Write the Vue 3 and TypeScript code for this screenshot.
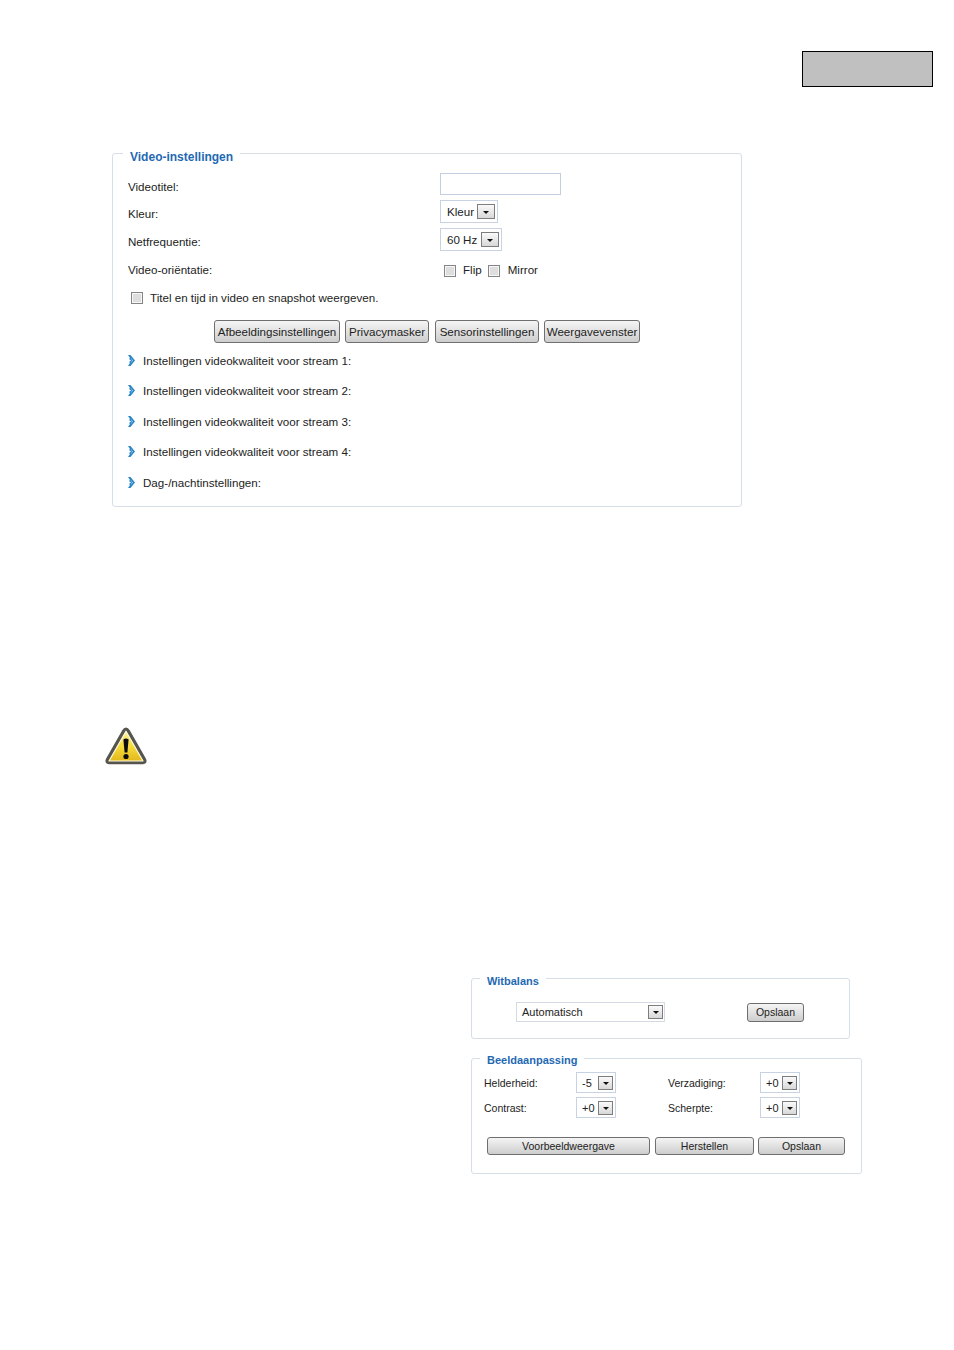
<script setup lang="ts">
const streams = [
  'Instellingen videokwaliteit voor stream 1:',
  'Instellingen videokwaliteit voor stream 2:',
  'Instellingen videokwaliteit voor stream 3:',
  'Instellingen videokwaliteit voor stream 4:',
  'Dag-/nachtinstellingen:',
]
const tabs = [
  { label: 'Afbeeldingsinstellingen', width: 126 },
  { label: 'Privacymasker', width: 84 },
  { label: 'Sensorinstellingen', width: 104 },
  { label: 'Weergavevenster', width: 96 },
]
const adjust = [
  { label: 'Helderheid:', value: '-5' },
  { label: 'Verzadiging:', value: '+0' },
  { label: 'Contrast:', value: '+0' },
  { label: 'Scherpte:', value: '+0' },
]
</script>

<template>
  <div class="page">
    <div class="greybox"></div>

    <fieldset class="panel video">
      <legend>Video-instellingen</legend>
      <div class="row first">
        <span class="label">Videotitel:</span>
        <input class="text-input" type="text" />
      </div>
      <div class="row">
        <span class="label">Kleur:</span>
        <div class="select colour"><span>Kleur</span><i class="arrow"></i></div>
      </div>
      <div class="row">
        <span class="label">Netfrequentie:</span>
        <div class="select freq"><span>60 Hz</span><i class="arrow"></i></div>
      </div>
      <div class="row check-row">
        <span class="label">Video-oriëntatie:</span>
        <div class="checks">
          <input type="checkbox" class="check" /><span class="flip">Flip</span>
          <input type="checkbox" class="check" /><span class="mirror">Mirror</span>
        </div>
      </div>
      <div class="overlay-row">
        <input type="checkbox" class="check" />
        <span>Titel en tijd in video en snapshot weergeven.</span>
      </div>
      <div class="tabs">
        <button v-for="t in tabs" :key="t.label" class="btn tab" :style="{ width: t.width + 'px' }">{{ t.label }}</button>
      </div>
      <ul class="streams">
        <li v-for="s in streams" :key="s">
          <svg width="7" height="11" viewBox="0 0 7 11">
            <path d="M0 0 L2.5 0 L7 5.5 L2.5 11 L0 11 L2 8 L1 7 L3 5.5 L1 4 L2 3 Z" fill="#2a86c6" />
            <path d="M2.5 2.5 L5 5.5 L2.5 8.5 L4 5.5 Z" fill="#a5d0ec" />
          </svg>
          <span>{{ s }}</span>
        </li>
      </ul>
    </fieldset>

    <svg class="warning" width="42" height="38" viewBox="0 0 42 38">
      <defs>
        <linearGradient id="yellow" x1="0" y1="0" x2="0" y2="1">
          <stop offset="0" stop-color="#fff3a0" />
          <stop offset="0.5" stop-color="#f6dc3c" />
          <stop offset="1" stop-color="#e4b81c" />
        </linearGradient>
      </defs>
      <path d="M21 0.5 Q23.2 0.5 24.6 3 L41 31.8 Q43 36.8 38 37.2 L4 37.2 Q-1 36.8 1 31.8 L17.4 3 Q18.8 0.5 21 0.5 Z" fill="#55554d" />
      <path d="M21 4.2 L38 34 L4 34 Z" fill="url(#yellow)" stroke="#fffbe0" stroke-width="1.2" stroke-linejoin="round" />
      <path d="M18.4 12.6 Q21 10.4 23.6 12.6 L22.4 25.5 L19.6 25.5 Z" fill="#0c0c0c" />
      <circle cx="21" cy="29.5" r="2.6" fill="#0c0c0c" />
    </svg>

    <fieldset class="panel white">
      <legend>Witbalans</legend>
      <div class="white-row">
        <div class="select wide"><span>Automatisch</span><i class="arrow"></i></div>
        <button class="btn save">Opslaan</button>
      </div>
    </fieldset>

    <fieldset class="panel image">
      <legend>Beeldaanpassing</legend>
      <div class="adjust">
        <template v-for="a in adjust" :key="a.label">
          <span class="adj-label">{{ a.label }}</span>
          <div class="select small"><span>{{ a.value }}</span><i class="arrow"></i></div>
        </template>
      </div>
      <div class="actions">
        <button class="btn preview">Voorbeeldweergave</button>
        <button class="btn reset">Herstellen</button>
        <button class="btn store">Opslaan</button>
      </div>
    </fieldset>
  </div>
</template>

<style>
html,
body {
  background: #fff;
}
</style>

<style scoped>
.page {
  width: 954px;
  height: 1350px;
  box-sizing: border-box;
  padding-top: 51px;
  display: flex;
  flex-direction: column;
  align-items: flex-start;
  font-family: "Liberation Sans", Arial, sans-serif;
  font-size: 11.6px;
  color: #222;
  overflow: hidden;
}
.greybox {
  width: 131px;
  height: 36px;
  box-sizing: border-box;
  margin-left: 802px;
  background: #c0c0c0;
  border: 1px solid #000;
}
.panel {
  margin: 0;
  min-width: 0;
  box-sizing: border-box;
  border: 1px solid #d6dee7;
  border-radius: 3px;
  padding: 0;
}
legend {
  padding: 8px 7px 0;
  margin-left: -5px;
  font-size: 12px;
  font-weight: bold;
  line-height: 14px;
  color: #1f69b3;
}
.video {
  margin-top: 55px;
  margin-left: 112px;
  width: 630px;
  height: 365px;
  padding: 9px 0 0 15px;
}
.row {
  display: flex;
  align-items: center;
  margin-top: 5px;
}
.row.first {
  margin-top: 0;
}
.label {
  width: 312px;
  padding-top: 4px;
}
.text-input {
  width: 121px;
  height: 22px;
  box-sizing: border-box;
  border: 1px solid #c3cfe0;
  background: #fff;
  padding: 0;
}
.select {
  height: 23px;
  box-sizing: border-box;
  border: 1px solid #c8d2e2;
  display: flex;
  align-items: center;
  justify-content: space-between;
  padding: 0 2px 0 6px;
  background: #fff;
}
.colour {
  width: 58px;
}
.freq {
  width: 62px;
}
.arrow {
  width: 18px;
  height: 15px;
  box-sizing: border-box;
  border: 1px solid #7d7d7d;
  background: linear-gradient(#fafafa, #d8d8d8);
  display: flex;
  align-items: center;
  justify-content: center;
}
.arrow::after {
  content: "";
  border-left: 3px solid transparent;
  border-right: 3px solid transparent;
  border-top: 3px solid #111;
  margin-top: 1px;
}
.check-row {
  height: 22px;
  margin-top: 8px;
}
.check-row .label {
  padding: 0 0 2px;
}
.checks {
  display: flex;
  align-items: center;
  padding-left: 4px;
}
.checks span {
  padding-bottom: 2px;
}
.checks .check {
  margin-top: 1px;
}
.check {
  appearance: none;
  width: 12px;
  height: 12px;
  margin: 0;
  box-sizing: border-box;
  border: 1px solid #858585;
  background: #dedede;
  box-shadow: inset 0 0 0 1px #f6f6f6;
}
.flip {
  margin: 0 6px 0 7px;
}
.mirror {
  margin-left: 8px;
}
.overlay-row {
  height: 22px;
  margin-top: 6px;
  margin-left: 3px;
  display: flex;
  align-items: center;
  gap: 7px;
}
.overlay-row span {
  padding-bottom: 2px;
}
.btn {
  box-sizing: border-box;
  padding: 0;
  border: 1px solid #6f6f6f;
  border-radius: 3px;
  background: linear-gradient(#f5f5f5, #cdcdcd);
  font-family: inherit;
  font-size: 11.6px;
  color: #222;
}
.tabs {
  display: flex;
  gap: 5px;
  margin-top: 11px;
  margin-left: 86px;
}
.tab {
  height: 23px;
}
.tab:nth-child(3) {
  margin-left: 1px;
}
.streams {
  list-style: none;
  margin: 2px 0 0;
  padding: 0;
}
.streams li {
  height: 30.5px;
  display: flex;
  align-items: center;
  gap: 8px;
}
.warning {
  margin-top: 220px;
  margin-left: 105px;
}
.white {
  margin-top: 203px;
  margin-left: 471px;
  width: 379px;
  height: 71px;
}
.white legend {
  padding: 6px 7px 0;
  margin-left: 8px;
  font-size: 11px;
}
.white-row {
  display: flex;
  align-items: center;
  margin-top: 14px;
  margin-left: 44px;
}
.wide {
  width: 149px;
  height: 20px;
  padding: 0 1px 0 5px;
  border-color: #d3dae6;
  font-size: 11px;
}
.wide .arrow {
  width: 15px;
  height: 14px;
}
.save {
  width: 57px;
  height: 19px;
  margin-left: 82px;
  font-size: 10.5px;
}
.image {
  margin-top: 10px;
  margin-left: 471px;
  width: 391px;
  height: 125px;
}
.image legend {
  padding: 4px 7px 0;
  margin-left: 8px;
  font-size: 11px;
}
.adjust {
  display: grid;
  grid-template-columns: 92px 40px 144px 40px;
  row-gap: 4px;
  margin-top: 5px;
  margin-left: 12px;
  align-items: center;
}
.adjust > :nth-child(4n + 3) {
  margin-left: 52px;
}
.adj-label {
  font-size: 10.5px;
  padding-top: 1px;
}
.small {
  height: 21px;
  padding: 0 2px 0 5px;
  font-size: 11px;
}
.small .arrow {
  width: 15px;
  height: 14px;
}
.actions {
  display: flex;
  gap: 5px;
  margin-top: 19px;
  margin-left: 15px;
}
.actions .btn {
  height: 18px;
  font-size: 10.5px;
}
.preview {
  width: 163px;
}
.reset {
  width: 99px;
}
.store {
  width: 87px;
  margin-left: -1px;
}
</style>
